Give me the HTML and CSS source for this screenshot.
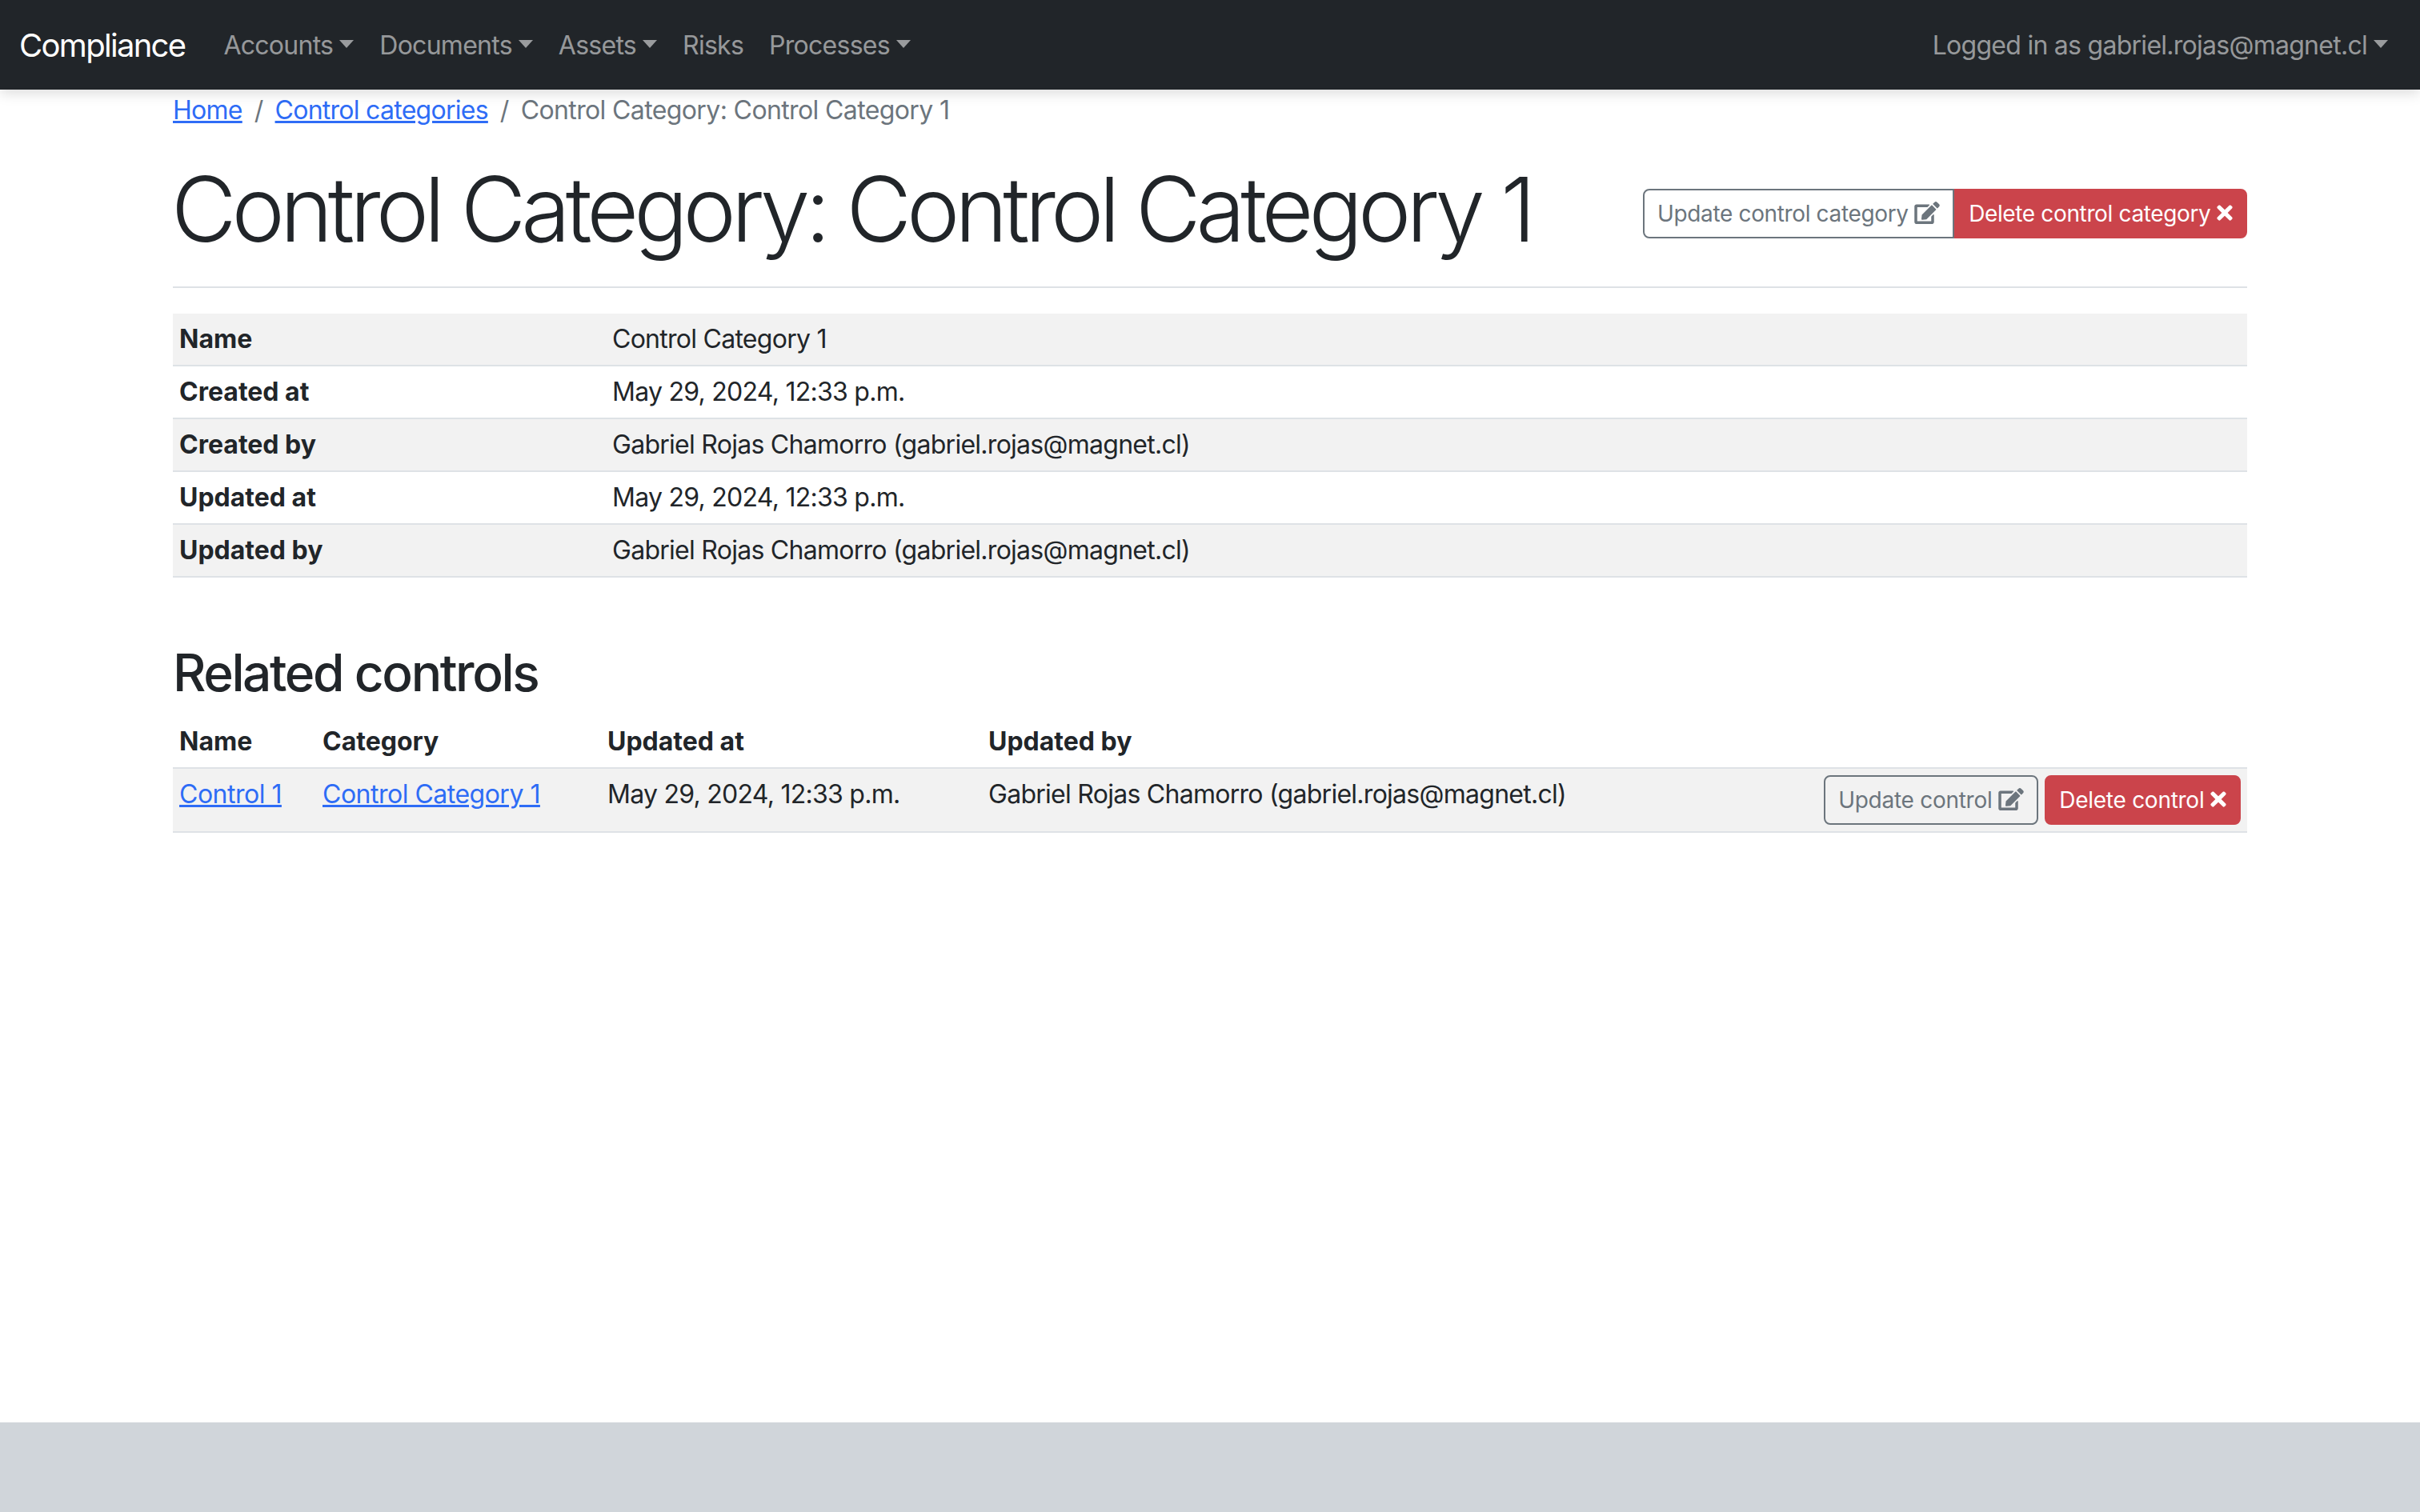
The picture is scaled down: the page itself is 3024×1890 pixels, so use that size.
FILE: index.html
```html
<!DOCTYPE html>
<html lang="en">
<head>
  <meta charset="UTF-8">
  <title>Control Category: Control Category 1</title>
  <link rel="stylesheet" href="styles.css">
</head>
<body>

  <nav class="navbar">
    <a class="brand" href="#">Compliance</a>
    <ul class="nav-list">
      <li><a class="nav-link caret" href="#">Accounts</a></li>
      <li><a class="nav-link caret" href="#">Documents</a></li>
      <li><a class="nav-link caret" href="#">Assets</a></li>
      <li><a class="nav-link" href="#">Risks</a></li>
      <li><a class="nav-link caret" href="#">Processes</a></li>
    </ul>
    <a class="nav-link caret user-link" href="#">Logged in as gabriel.rojas@magnet.cl</a>
  </nav>

  <main class="container">
    <ol class="breadcrumb">
      <li><a href="#">Home</a></li>
      <li class="crumb-sep">/</li>
      <li><a href="#">Control categories</a></li>
      <li class="crumb-sep">/</li>
      <li class="crumb-active">Control Category: Control Category 1</li>
    </ol>

    <div class="page-header">
      <h1>Control Category: Control Category 1</h1>
      <div class="btn-group">
        <a class="btn btn-outline" href="#">Update control category
          <svg class="icon icon-edit" viewBox="0 0 576 512"><path d="M402.6 83.2l90.2 90.2c3.8 3.8 3.8 10 0 13.8L274.4 405.6l-92.8 10.3c-12.4 1.4-22.9-9.1-21.5-21.5l10.3-92.8L388.8 83.2c3.8-3.8 10-3.8 13.8 0zm162-22.9l-48.8-48.8c-15.2-15.2-39.9-15.2-55.2 0l-35.4 35.4c-3.8 3.8-3.8 10 0 13.8l90.2 90.2c3.8 3.8 10 3.8 13.8 0l35.4-35.4c15.2-15.3 15.2-40 0-55.2zM384 346.2V448H64V128h229.8c3.2 0 6.2-1.3 8.5-3.5l40-40c7.6-7.6 2.2-20.5-8.5-20.5H48C21.5 64 0 85.5 0 112v352c0 26.5 21.5 48 48 48h352c26.5 0 48-21.5 48-48V306.2c0-10.7-12.9-16-20.5-8.5l-40 40c-2.2 2.3-3.5 5.3-3.5 8.5z"/></svg>
        </a>
        <a class="btn btn-danger" href="#">Delete control category
          <svg class="icon icon-times" viewBox="0 0 352 512"><path d="M242.72 256l100.07-100.07c12.28-12.28 12.28-32.19 0-44.48l-22.24-22.24c-12.28-12.28-32.19-12.28-44.48 0L176 189.28 75.93 89.21c-12.28-12.28-32.19-12.28-44.48 0L9.21 111.45c-12.28 12.28-12.28 32.19 0 44.48L109.28 256 9.21 356.07c-12.28 12.28-12.28 32.19 0 44.48l22.24 22.24c12.28 12.28 32.2 12.28 44.48 0L176 322.72l100.07 100.07c12.28 12.28 32.2 12.28 44.48 0l22.24-22.24c12.28-12.28 12.28-32.19 0-44.48L242.72 256z"/></svg>
        </a>
      </div>
    </div>

    <table class="table detail-table">
      <tbody>
        <tr><th>Name</th><td>Control Category 1</td></tr>
        <tr><th>Created at</th><td>May 29, 2024, 12:33 p.m.</td></tr>
        <tr><th>Created by</th><td>Gabriel Rojas Chamorro (gabriel.rojas@magnet.cl)</td></tr>
        <tr><th>Updated at</th><td>May 29, 2024, 12:33 p.m.</td></tr>
        <tr><th>Updated by</th><td>Gabriel Rojas Chamorro (gabriel.rojas@magnet.cl)</td></tr>
      </tbody>
    </table>

    <h2>Related controls</h2>

    <table class="table related-table">
      <thead>
        <tr>
          <th class="col-name">Name</th>
          <th class="col-category">Category</th>
          <th class="col-updated">Updated at</th>
          <th>Updated by</th>
          <th class="col-actions"></th>
        </tr>
      </thead>
      <tbody>
        <tr>
          <td><a href="#">Control 1</a></td>
          <td><a href="#">Control Category 1</a></td>
          <td>May 29, 2024, 12:33 p.m.</td>
          <td>Gabriel Rojas Chamorro (gabriel.rojas@magnet.cl)</td>
          <td class="actions">
            <a class="btn btn-outline" href="#">Update control
              <svg class="icon icon-edit" viewBox="0 0 576 512"><path d="M402.6 83.2l90.2 90.2c3.8 3.8 3.8 10 0 13.8L274.4 405.6l-92.8 10.3c-12.4 1.4-22.9-9.1-21.5-21.5l10.3-92.8L388.8 83.2c3.8-3.8 10-3.8 13.8 0zm162-22.9l-48.8-48.8c-15.2-15.2-39.9-15.2-55.2 0l-35.4 35.4c-3.8 3.8-3.8 10 0 13.8l90.2 90.2c3.8 3.8 10 3.8 13.8 0l35.4-35.4c15.2-15.3 15.2-40 0-55.2zM384 346.2V448H64V128h229.8c3.2 0 6.2-1.3 8.5-3.5l40-40c7.6-7.6 2.2-20.5-8.5-20.5H48C21.5 64 0 85.5 0 112v352c0 26.5 21.5 48 48 48h352c26.5 0 48-21.5 48-48V306.2c0-10.7-12.9-16-20.5-8.5l-40 40c-2.2 2.3-3.5 5.3-3.5 8.5z"/></svg>
            </a>
            <a class="btn btn-danger" href="#">Delete control
              <svg class="icon icon-times" viewBox="0 0 352 512"><path d="M242.72 256l100.07-100.07c12.28-12.28 12.28-32.19 0-44.48l-22.24-22.24c-12.28-12.28-32.19-12.28-44.48 0L176 189.28 75.93 89.21c-12.28-12.28-32.19-12.28-44.48 0L9.21 111.45c-12.28 12.28-12.28 32.19 0 44.48L109.28 256 9.21 356.07c-12.28 12.28-12.28 32.19 0 44.48l22.24 22.24c12.28 12.28 32.2 12.28 44.48 0L176 322.72l100.07 100.07c12.28 12.28 32.2 12.28 44.48 0l22.24-22.24c12.28-12.28 12.28-32.19 0-44.48L242.72 256z"/></svg>
            </a>
          </td>
        </tr>
      </tbody>
    </table>
  </main>

  <footer class="footer"></footer>

</body>
</html>
```

FILE: styles.css
```css
* {
  box-sizing: border-box;
}

body {
  margin: 0;
  min-height: 100vh;
  display: flex;
  flex-direction: column;
  font-family: 'Inter', 'Liberation Sans', sans-serif;
  font-size: 32px;
  line-height: 48px;
  letter-spacing: -0.73px;
  color: #212529;
  background: #fff;
}

a {
  color: #2e6cf6;
}

/* Navbar */
.navbar {
  position: relative;
  height: 112px;
  padding: 2px 24px 0;
  display: flex;
  align-items: center;
  background: #212529;
  box-shadow: 0 4px 16px rgba(0, 0, 0, 0.15);
}

.brand {
  margin-right: 32px;
  font-size: 40px;
  letter-spacing: -1.7px;
  color: #fff;
  text-decoration: none;
}

.nav-list {
  display: flex;
  flex: 1;
  margin: 0;
  padding: 0;
  list-style: none;
}

.nav-link {
  display: block;
  padding: 0 16px;
  color: rgba(255, 255, 255, 0.55);
  text-decoration: none;
}

.caret::after {
  content: "";
  display: inline-block;
  margin-left: 8px;
  vertical-align: 8px;
  border-top: 10px solid;
  border-left: 9px solid transparent;
  border-right: 9px solid transparent;
}

/* Content */
.container {
  flex: 1;
  width: 2592px;
  margin: 0 auto;
}

.breadcrumb {
  display: flex;
  gap: 15px;
  margin: 0;
  padding: 2px 0 0;
  list-style: none;
}

.crumb-sep,
.crumb-active {
  color: #6c757d;
}

.crumb-active {
  letter-spacing: -0.62px;
}

.page-header {
  display: flex;
  justify-content: space-between;
  align-items: center;
  padding: 32px 0 30px;
  margin-bottom: 32px;
  border-bottom: 2px solid #dee2e6;
}

h1 {
  margin: 0 0 0 -2px;
  font-size: 112px;
  font-weight: 300;
  line-height: 134px;
  letter-spacing: -6px;
  white-space: nowrap;
}

h2 {
  margin: 80px 0 16px;
  font-size: 64px;
  font-weight: 500;
  line-height: 77px;
  letter-spacing: -2.4px;
}

/* Buttons */
.btn {
  display: inline-block;
  padding: 8px 16px;
  border: 2px solid;
  border-radius: 8px;
  font-size: 28px;
  line-height: 42px;
  letter-spacing: -0.27px;
  text-decoration: none;
  white-space: nowrap;
}

.btn-outline {
  color: #6c757d;
  border-color: #6c757d;
}

.btn-danger {
  color: #fff;
  background: #cb444b;
  border-color: #cb444b;
}

.btn-group {
  display: flex;
  margin-top: 12px;
}

.btn-group .btn {
  letter-spacing: -0.36px;
}

.btn-group .btn-outline {
  border-top-right-radius: 0;
  border-bottom-right-radius: 0;
}

.btn-group .btn-danger {
  border-top-left-radius: 0;
  border-bottom-left-radius: 0;
}

.icon {
  height: 28px;
  fill: currentColor;
  vertical-align: -3px;
}

.icon-edit {
  width: 32px;
}

.icon-times {
  width: 20px;
}

/* Tables */
.table {
  width: 100%;
  margin-bottom: 32px;
  border-collapse: collapse;
  table-layout: fixed;
}

.table th,
.table td {
  padding: 8px;
  border-bottom: 2px solid #dee2e6;
  text-align: left;
  vertical-align: top;
}

.table th {
  font-weight: 700;
  letter-spacing: 0;
}

.table td a {
  letter-spacing: -0.5px;
}

.table td .btn {
  letter-spacing: -0.27px;
}

.detail-table th {
  width: 541px;
}

.detail-table tbody tr:nth-child(odd),
.related-table tbody tr:nth-child(odd) {
  background: #f2f2f2;
}

.col-name {
  width: 179px;
}

.col-category {
  width: 356px;
}

.col-updated {
  width: 476px;
}

.col-actions {
  width: 560px;
}

.table .actions {
  text-align: right;
}

.footer {
  height: 112px;
  background: #d0d5da;
}
```
